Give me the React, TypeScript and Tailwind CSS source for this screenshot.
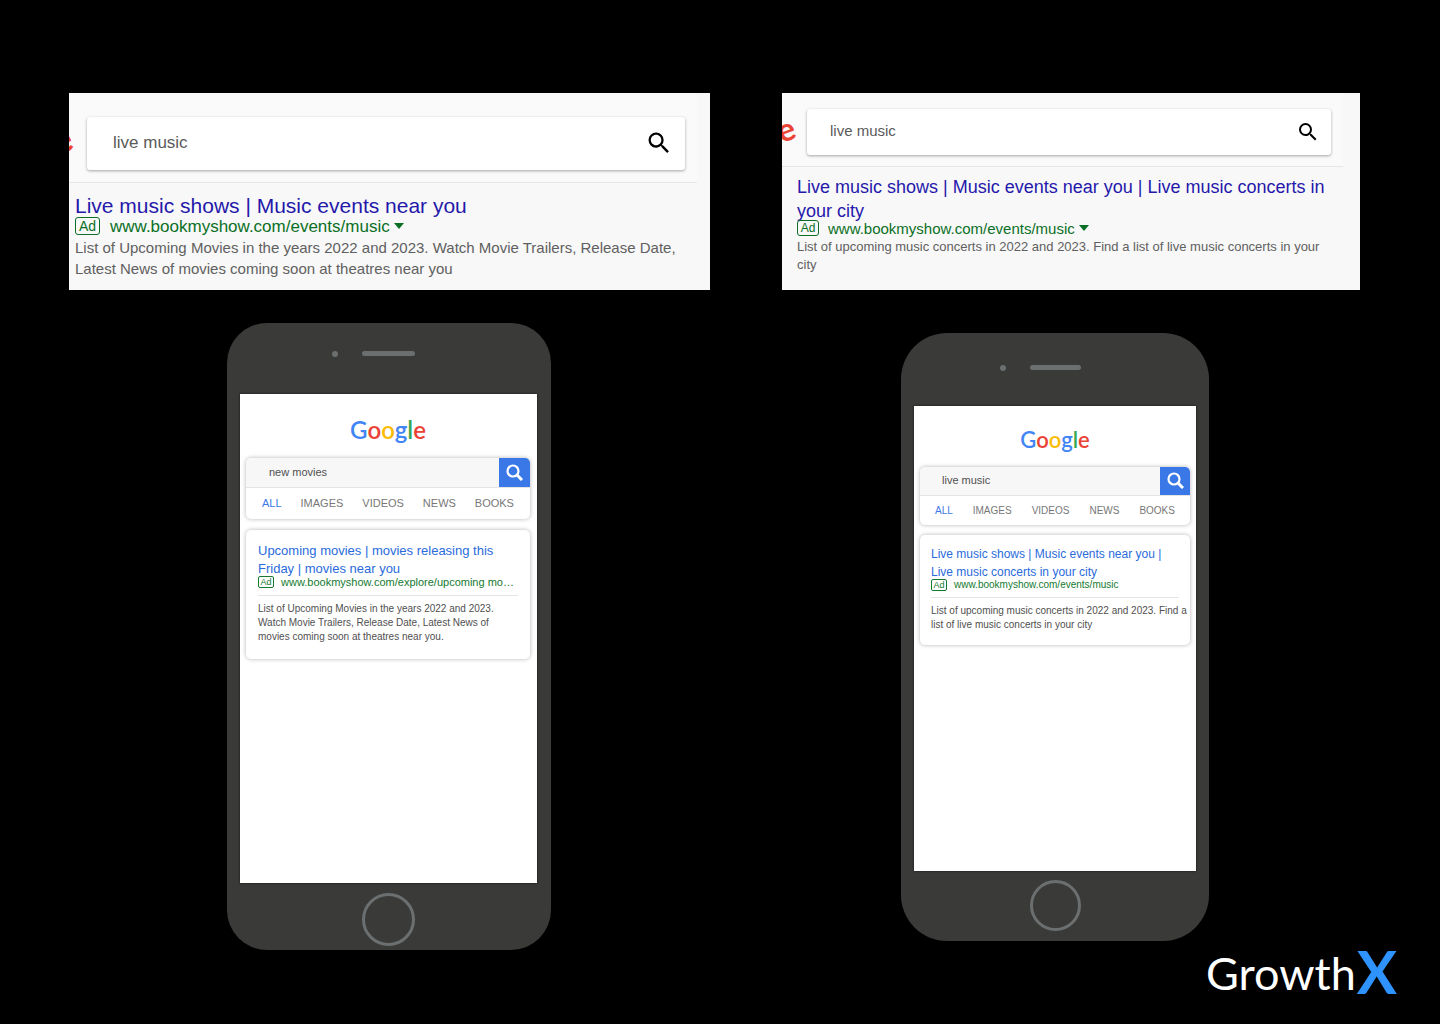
import { MdSearch } from "react-icons/md";

type DesktopAdProps = {
  id: string;
  query: string;
  title: string;
  url: string;
  description: string;
  size: "large" | "small";
};

type PhoneProps = {
  id: string;
  query: string;
  title: string[];
  url: string;
  description: string[];
  size: "large" | "small";
};

const desktopStyles = {
  large: {
    header: "mr-[13px] h-[90px] pt-6 pr-3",
    logo: "w-[18px]",
    letter: "-ml-[17px] h-[44px] text-[36px]",
    box: "h-[53px] pl-[26px] pr-3 pb-[2px]",
    input: "text-[17px]",
    icon: "size-7",
    body: "pl-[6px] pt-[11px] pr-3",
    title: "text-[21px] leading-6",
    row: "h-[18px] -mt-px gap-[10px]",
    badge: "h-[18px] w-[25px] text-[14px]",
    url: "text-[17px]",
    text: "mt-[2px] text-[15px] leading-[21px]",
  },
  small: {
    header: "mr-[17px] h-[74px] pt-4 pr-3",
    logo: "w-[25px]",
    letter: "-ml-[5px] h-[40px] text-[32px]",
    box: "h-[46px] pl-[23px] pr-[11px] pb-px",
    input: "text-[15px]",
    icon: "size-6",
    body: "pl-[15px] pt-2 pr-8",
    title: "text-[18px] leading-6",
    row: "h-4 -mt-[3px] gap-[9px]",
    badge: "h-4 w-[22px] text-[12px]",
    url: "text-[15px]",
    text: "mt-[2px] text-[13px] leading-[18px]",
  },
};

const phoneStyles = {
  large: {
    body: "max-w-[324px] rounded-[40px] pl-[13px] pr-[14px] pb-1",
    top: "h-[71px] pt-[28px]",
    bar: "w-[53px]",
    screen: "h-[489px] pl-[6px] pr-[7px]",
    logo: "h-16 pt-[20px] text-[24px]",
    input: "h-[29px] pl-[23px]",
    button: "w-[31px]",
    tabs: "h-[31px] px-4 text-[11px]",
    card: "mt-[11px] h-[129px] px-3 pt-3",
    title: "text-[13px]",
    url: "text-[11px]",
    divider: "mt-[7px]",
    ring: "mt-[10px] size-[53px]",
  },
  small: {
    body: "max-w-[308px] rounded-[46px] px-[13px] pb-[10px]",
    top: "h-[73px] pt-[32px]",
    bar: "w-[51px]",
    screen: "h-[465px] px-[6px]",
    logo: "h-[61px] pt-[18px] text-[22px]",
    input: "h-[28px] pl-[22px]",
    button: "w-[30px]",
    tabs: "h-[29px] px-[15px] text-[10px]",
    card: "mt-[10px] h-[110px] px-[11px] pt-[10px]",
    title: "text-[12px]",
    url: "text-[10px]",
    divider: "mt-[6px]",
    ring: "mt-[9px] size-[51px]",
  },
};

const tabs = ["ALL", "IMAGES", "VIDEOS", "NEWS", "BOOKS"];

function GoogleLogo({ className }: { className: string }) {
  return (
    <div className={`text-center font-[Lato,sans-serif] leading-[32px] font-semibold ${className}`}>
      <span className="text-[#4285f4]">G</span>
      <span className="text-[#ea4335]">o</span>
      <span className="text-[#fbbc05]">o</span>
      <span className="text-[#4285f4]">g</span>
      <span className="text-[#34a853]">l</span>
      <span className="text-[#ea4335]">e</span>
    </div>
  );
}

function DesktopAd({ id, query, title, url, description, size }: DesktopAdProps) {
  const s = desktopStyles[size];
  return (
    <section className="h-[197px] overflow-hidden bg-[#f8f8f8]">
      <div className={`flex border-b border-[#e6e6e6] bg-[#fafafa] ${s.header}`}>
        <div className={`shrink-0 overflow-hidden ${s.logo}`}>
          <span
            className={`flex w-[18px] -rotate-[20deg] items-center font-[Lato,sans-serif] leading-none font-bold text-[#ea4335] ${s.letter}`}
          >
            e
          </span>
        </div>
        <form
          className={`flex flex-1 items-center rounded-[3px] bg-white shadow-[0_1px_3px_rgba(0,0,0,0.35)] ${s.box}`}
        >
          <input
            id={id}
            aria-label="Search"
            defaultValue={query}
            className={`min-w-0 flex-1 text-[#5a5a5a] outline-none ${s.input}`}
          />
          <button type="button" aria-label="Submit search" className="text-black">
            <MdSearch className={s.icon} />
          </button>
        </form>
      </div>
      <div className={s.body}>
        <a href="#" className={`block text-[#2518ab] ${s.title}`}>
          {title}
        </a>
        <div className={`flex items-center text-[#0b7026] ${s.row}`}>
          <span
            className={`flex items-center justify-center rounded-[3px] border border-[#0b7026] leading-none ${s.badge}`}
          >
            Ad
          </span>
          <span className="flex items-center gap-1">
            <span className={`leading-none ${s.url}`}>{url}</span>
            <svg viewBox="0 0 10 6" className="h-[6px] w-[10px]" fill="currentColor">
              <path d="M0 0h10L5 6z" />
            </svg>
          </span>
        </div>
        <p className={`text-[#606060] ${s.text}`}>{description}</p>
      </div>
    </section>
  );
}

function Phone({ id, query, title, url, description, size }: PhoneProps) {
  const s = phoneStyles[size];
  return (
    <section className={`w-full bg-[#3a3a38] ${s.body}`}>
      <div className={`grid grid-cols-[1fr_auto_1fr] items-start ${s.top}`}>
        <span className="mr-6 size-[6px] justify-self-end rounded-full bg-[#6b6f70]" />
        <span className={`h-[5px] rounded-full bg-[#6b6f70] ${s.bar}`} />
      </div>
      <div className={`bg-white shadow-[0_0_2px_#111] ${s.screen}`}>
        <GoogleLogo className={s.logo} />
        <div className="overflow-hidden rounded-[5px] bg-white shadow-[0_0_4px_rgba(0,0,0,0.3)]">
          <form className="flex border-b border-[#e4e4e4] bg-[#f7f7f7]">
            <input
              id={id}
              aria-label="Search"
              defaultValue={query}
              className={`min-w-0 flex-1 pb-[2px] text-[11px] text-[#505050] outline-none ${s.input}`}
            />
            <button
              type="button"
              aria-label="Submit search"
              className={`flex items-center justify-center bg-[#3b78e7] pb-px text-white ${s.button}`}
            >
              <svg viewBox="0 0 17 17" className="size-[17px]" fill="none" stroke="currentColor">
                <circle cx="7" cy="7" r="5.5" strokeWidth="2.2" />
                <path d="M11 11l5 5" strokeWidth="3" />
              </svg>
            </button>
          </form>
          <nav className={`flex items-center justify-between pb-px ${s.tabs}`}>
            {tabs.map((tab) => (
              <a
                key={tab}
                href="#"
                className={tab === "ALL" ? "text-[#3b78e7]" : "text-[#777777]"}
              >
                {tab}
              </a>
            ))}
          </nav>
        </div>
        <article className={`rounded-[5px] bg-white shadow-[0_0_4px_rgba(0,0,0,0.3)] ${s.card}`}>
          <a href="#" className={`block leading-[18px] whitespace-nowrap text-[#2a6bdc] ${s.title}`}>
            {title.map((line) => (
              <span key={line} className="block">
                {line}
              </span>
            ))}
          </a>
          <div className="-mt-[2px] flex h-3 items-center gap-[7px] text-[#147a30]">
            <span className="flex h-3 w-4 items-center justify-center rounded-[2px] border border-[#147a30] text-[9px] leading-none">
              Ad
            </span>
            <span className={`leading-none whitespace-nowrap ${s.url}`}>{url}</span>
          </div>
          <div
            className={`border-t border-[#e4e4e4] pt-[6px] text-[10px] leading-[14px] whitespace-nowrap text-[#505050] ${s.divider}`}
          >
            {description.map((line) => (
              <p key={line}>{line}</p>
            ))}
          </div>
        </article>
      </div>
      <button
        type="button"
        aria-label="Home"
        className={`mx-auto block rounded-full border-[3px] border-[#6b6f70] ${s.ring}`}
      />
    </section>
  );
}

export default function App() {
  return (
    <div className="min-h-screen bg-black font-['Liberation_Sans',Arial,sans-serif]">
      <main className="grid grid-cols-[641fr_578fr] gap-x-[72px] pt-[93px] pr-20 pl-[69px]">
        <div className="flex flex-col gap-[33px]">
          <DesktopAd
            id="desktop-search-movies"
            size="large"
            query="live music"
            title="Live music shows | Music events near you"
            url="www.bookmyshow.com/events/music"
            description="List of Upcoming Movies in the years 2022 and 2023. Watch Movie Trailers, Release Date, Latest News of movies coming soon at theatres near you"
          />
          <div className="flex justify-center pr-px">
            <Phone
              id="phone-search-movies"
              size="large"
              query="new movies"
              title={["Upcoming movies | movies releasing this", "Friday | movies near you"]}
              url="www.bookmyshow.com/explore/upcoming mo…"
              description={[
                "List of Upcoming Movies in the years 2022 and 2023.",
                "Watch Movie Trailers, Release Date, Latest News of",
                "movies coming soon at theatres near you.",
              ]}
            />
          </div>
        </div>
        <div className="flex flex-col gap-[43px]">
          <DesktopAd
            id="desktop-search-music"
            size="small"
            query="live music"
            title="Live music shows | Music events near you | Live music concerts in your city"
            url="www.bookmyshow.com/events/music"
            description="List of upcoming music concerts in 2022 and 2023. Find a list of live music concerts in your city"
          />
          <div className="flex justify-center pr-8">
            <Phone
              id="phone-search-music"
              size="small"
              query="live music"
              title={["Live music shows | Music events near you |", "Live music concerts in your city"]}
              url="www.bookmyshow.com/events/music"
              description={[
                "List of upcoming music concerts in 2022 and 2023. Find a",
                "list of live music concerts in your city",
              ]}
            />
          </div>
        </div>
      </main>
      <footer className="flex h-[46px] items-center justify-end gap-px pr-[43px] font-[Lato,sans-serif] leading-[46px] text-white">
        <span className="text-[45px]">Growth</span>
        <span className="pb-1 text-[60px] font-bold text-[#2f93ff]">X</span>
      </footer>
    </div>
  );
}
